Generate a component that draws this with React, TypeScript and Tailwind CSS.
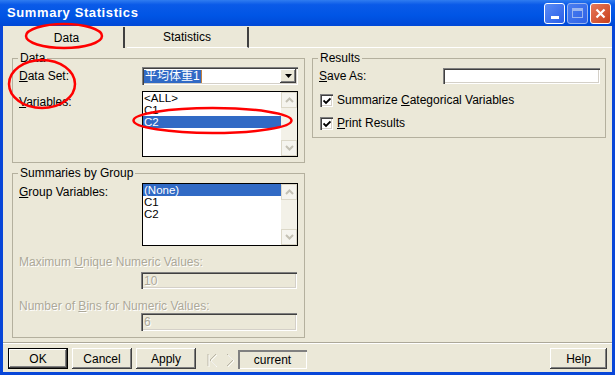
import React from 'react';

const raised =
  'shadow-[inset_-1px_-1px_0_#404040,inset_1px_1px_0_#ffffff,inset_-2px_-2px_0_#808080]';
const sunken =
  'shadow-[inset_1px_1px_0_#808080,inset_2px_2px_0_#404040,inset_-1px_-1px_0_#ffffff,inset_-2px_-2px_0_#d4d0c8]';
const disabledText = 'text-[#aca899] [text-shadow:1px_1px_0_#ffffff]';

const Legend = ({ children }: { children: React.ReactNode }) => (
  <div className="-mt-[7px] ml-[5px] self-start px-[2px] h-[12px] leading-[12px] bg-[#ebe8d8]">{children}</div>
);

const ScrollBar = () => (
  <div className="w-[16px] h-full flex flex-col bg-[#f3f1e8]">
    <div className="h-[16px] flex items-center justify-center border border-[#dcd8c8] bg-[#f5f4ee]">
      <svg width="9" height="6" viewBox="0 0 9 6">
        <path d="M1 5 L4.5 1.5 L8 5" stroke="#c4c1b4" strokeWidth="2" fill="none" />
      </svg>
    </div>
    <div className="flex-1" />
    <div className="h-[16px] flex items-center justify-center border border-[#dcd8c8] bg-[#f5f4ee]">
      <svg width="9" height="6" viewBox="0 0 9 6">
        <path d="M1 1 L4.5 4.5 L8 1" stroke="#c4c1b4" strokeWidth="2" fill="none" />
      </svg>
    </div>
  </div>
);

const ListBox = ({ items, selected, h }: { items: string[]; selected: number; h: string }) => (
  <div className={`w-[156px] ${h} border border-black bg-white flex`}>
    <div className="flex-1 flex flex-col">
      {items.map((it, i) => (
        <div
          key={i}
          className={`h-[12px] leading-[12px] text-[11.5px] pl-[1px] overflow-hidden ${i === selected ? 'bg-[#316ac5] text-white' : ''}`}
        >
          {it}
        </div>
      ))}
    </div>
    <ScrollBar />
  </div>
);

const CheckBox = ({ label }: { label: React.ReactNode }) => (
  <div className="flex items-center h-[13px] pl-[7px] gap-[4px]">
    <div className={`w-[13px] h-[13px] bg-white flex items-center justify-center ${sunken}`}>
      <svg width="8" height="8" viewBox="0 0 8 8">
        <path d="M0.5 3.5 L3 6 L7.5 1.5" stroke="#000" strokeWidth="1.8" fill="none" />
      </svg>
    </div>
    <span className="leading-[13px]">{label}</span>
  </div>
);

const Button = ({ children, w, def }: { children: React.ReactNode; w: string; def?: boolean }) => (
  <div
    className={`${w} h-[21px] flex items-center justify-center bg-[#ebe8d8] ${raised} ${def ? 'border border-black' : ''}`}
  >
    {children}
  </div>
);

export default function App() {
  return (
    <div className="w-[615px] h-[375px] bg-[#0846d8] flex flex-col relative overflow-hidden font-['Liberation_Sans',Arial,'Noto_Sans_CJK_JP',sans-serif] text-[12px] text-black">
      {/* Title bar */}
      <div className="h-[26px] flex items-center pl-[7px] pr-[4px] bg-[linear-gradient(#2f7cf0,#0a5ae8_18%,#0055e5_60%,#0048d6)]">
        <span className="text-white font-bold text-[13px] tracking-[0.6px] mt-[-1px]">Summary Statistics</span>
        <div className="ml-auto flex gap-[2px]">
          <div className="w-[21px] h-[21px] rounded-[3px] border border-white bg-[linear-gradient(135deg,#5a8cf5,#2a5ee8)] flex items-end justify-center pb-[4px]">
            <div className="w-[8px] h-[3px] bg-white" />
          </div>
          <div className="w-[21px] h-[21px] rounded-[3px] border border-[#9ab6f0] bg-[linear-gradient(135deg,#4a7ef0,#2f62e6)] flex items-center justify-center">
            <div className="w-[11px] h-[10px] border border-[#9ab6f0] border-t-[3px]" />
          </div>
          <div className="w-[21px] h-[21px] rounded-[3px] border border-white bg-[linear-gradient(135deg,#e8795a,#c8401c)] flex items-center justify-center">
            <svg width="11" height="11" viewBox="0 0 11 11">
              <path d="M1.5 1.5 L9.5 9.5 M9.5 1.5 L1.5 9.5" stroke="#fff" strokeWidth="2.2" />
            </svg>
          </div>
        </div>
      </div>

      {/* Body */}
      <div className="flex-1 mx-[3px] mb-[3px] bg-[#ebe8d8] flex flex-col">
        {/* Tabs */}
        <div className="mt-[1px] h-[21px] flex pl-[7px]">
          <div className="w-[115px] h-full flex items-center justify-center border-r-2 border-[#404040]">Data</div>
          <div className="w-[122px] ml-[2px] h-full flex items-center justify-center border-r-2 border-[#404040] border-b border-b-white">
            Statistics
          </div>
          <div className="flex-1 border-b border-white" />
        </div>

        {/* Panel */}
        <div className="h-[294px] flex pl-[9px] pt-[4px]">
          {/* Left column */}
          <div className="w-[293px] flex flex-col">
            <div className="mt-[6px] h-[105px] border border-[#b4b09e] flex flex-col">
              <Legend>Data</Legend>
              <div className="mt-[3px] flex items-center h-[18px]">
                <div className="w-[129px] pl-[6px]">
                  <u>D</u>ata Set:
                </div>
                <div className={`w-[156px] h-[18px] bg-white flex items-center pl-[2px] pr-[2px] ${sunken}`}>
                  <span className="bg-[#316ac5] text-white leading-[13px] px-[1px]">平均体重1</span>
                  <span className="w-[1px] h-[13px] bg-[#c08040]" />
                  <div className={`ml-auto w-[16px] h-[14px] bg-[#ebe8d8] flex items-center justify-center ${raised}`}>
                    <svg width="7" height="4" viewBox="0 0 7 4">
                      <path d="M0 0 H7 L3.5 4 Z" fill="#000" />
                    </svg>
                  </div>
                </div>
              </div>
              <div className="mt-[6px] flex">
                <div className="w-[129px] pl-[6px] pt-[2px]">
                  <u>V</u>ariables:
                </div>
                <ListBox items={['<ALL>', 'C1', 'C2']} selected={2} h="h-[66px]" />
              </div>
            </div>

            <div className="mt-[10px] h-[165px] border border-[#b4b09e] flex flex-col">
              <Legend>Summaries by Group</Legend>
              <div className="mt-[4px] flex">
                <div className="w-[129px] pl-[6px]">
                  <u>G</u>roup Variables:
                </div>
                <ListBox items={['(None)', 'C1', 'C2']} selected={0} h="h-[63px]" />
              </div>
              <div className={`mt-[10px] pl-[6px] leading-[12px] ${disabledText}`}>
                Maximum <u>U</u>nique Numeric Values:
              </div>
              <div className={`mt-[4px] ml-[128px] w-[156px] h-[17px] flex items-center pl-[3px] ${sunken} ${disabledText}`}>
                10
              </div>
              <div className={`mt-[11px] pl-[6px] leading-[12px] ${disabledText}`}>
                Number of <u>B</u>ins for Numeric Values:
              </div>
              <div className={`mt-[1px] ml-[128px] w-[156px] h-[18px] flex items-center pl-[3px] ${sunken} ${disabledText}`}>
                6
              </div>
            </div>
          </div>

          {/* Right column */}
          <div className="ml-[7px] w-[294px] flex flex-col">
            <div className="mt-[6px] h-[80px] border border-[#b4b09e] flex flex-col">
              <Legend>Results</Legend>
              <div className="mt-[4px] flex items-center h-[16px]">
                <div className="w-[130px] pl-[6px]">
                  <u>S</u>ave As:
                </div>
                <div className={`w-[157px] h-[16px] bg-white ${sunken}`} />
              </div>
              <div className="mt-[10px]">
                <CheckBox
                  label={
                    <>
                      Summarize <u>C</u>ategorical Variables
                    </>
                  }
                />
              </div>
              <div className="mt-[10px]">
                <CheckBox
                  label={
                    <>
                      <u>P</u>rint Results
                    </>
                  }
                />
              </div>
            </div>
          </div>
        </div>

        {/* Separator */}
        <div className="h-[2px] border-t border-[#aca899] border-b border-b-white" />

        {/* Buttons */}
        <div className="mt-[4px] h-[21px] flex pl-[5px] pr-[5px]">
          <div className="flex gap-[4px]">
            <Button w="w-[60px]" def>
              OK
            </Button>
            <Button w="w-[60px]">Cancel</Button>
            <Button w="w-[60px]">Apply</Button>
          </div>
          <div className="ml-[7px] w-[35px] h-[19px] self-end flex items-center justify-around">
            <svg width="14" height="16" viewBox="0 0 14 16">
              <path d="M3 2 V14 M11 2 L5 8 L11 14" stroke="#b8b4a6" strokeWidth="1" fill="none" />
              <path d="M4 3 V15 M12 3 L6 9 L12 15" stroke="#ffffff" strokeWidth="0.8" fill="none" />
            </svg>
            <svg width="12" height="16" viewBox="0 0 12 16">
              <path d="M3 2 L9 8 L3 14" stroke="#b8b4a6" strokeWidth="1" fill="none" />
              <path d="M4 3 L10 9 L4 15" stroke="#ffffff" strokeWidth="0.8" fill="none" />
            </svg>
          </div>
          <div className="w-[69px] h-[19px] self-end flex items-center justify-center shadow-[inset_2px_2px_0_#808080,inset_-1px_-1px_0_#ffffff]">
            current
          </div>
          <div className="ml-auto">
            <Button w="w-[57px]">Help</Button>
          </div>
        </div>
      </div>

      {/* Red annotation ellipses */}
      <svg className="absolute inset-0 pointer-events-none" width="615" height="375" viewBox="0 0 615 375">
        <ellipse cx="64" cy="36" rx="38" ry="12" stroke="#ff0000" strokeWidth="2.5" fill="none" />
        <ellipse cx="42" cy="84" rx="33" ry="24" stroke="#ff0000" strokeWidth="2.5" fill="none" />
        <ellipse cx="212.5" cy="120.5" rx="79" ry="12.5" stroke="#ff0000" strokeWidth="2.5" fill="none" />
      </svg>
    </div>
  );
}
